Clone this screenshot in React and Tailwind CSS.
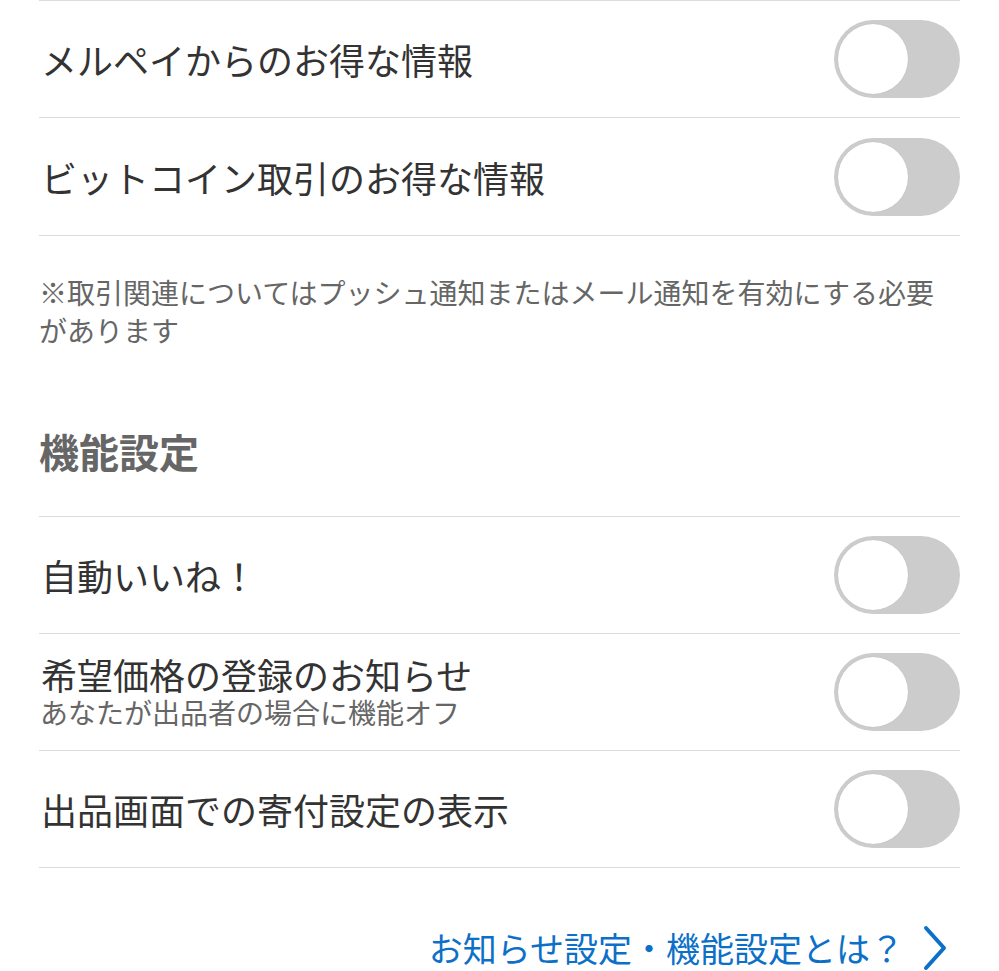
import React from "react";

function Toggle() {
  return (
    <div className="w-[126px] h-[78px] rounded-full bg-[#cccccc] p-[4px] shrink-0 flex items-center">
      <div className="w-[70px] h-[70px] rounded-full bg-white shadow-[0_0_1px_rgba(0,0,0,0.15)]" />
    </div>
  );
}

function Row({ title, sub, first }) {
  return (
    <div
      className={
        "flex items-center justify-between border-b border-[#dcdcdc]" +
        (first ? " border-t h-[118px]" : " h-[117px]")
      }
    >
      <div className="flex flex-col">
        <div className="text-[36px] leading-[40px] text-[#333333] pl-[2px]">{title}</div>
        {sub && (
          <div className="text-[28px] leading-[36px] text-[#666666] pl-[1px]">{sub}</div>
        )}
      </div>
      <Toggle />
    </div>
  );
}

export default function App() {
  return (
    <div
      className="bg-white w-[999px] h-[971px] overflow-hidden px-[39px]"
      style={{ fontFamily: '"Noto Sans CJK JP", "Noto Sans", sans-serif' }}
    >
      <div className="border-t border-[#dcdcdc] h-[118px] flex items-center justify-between border-b">
        <div className="text-[36px] leading-[40px] text-[#333333] pl-[2px]">メルペイからのお得な情報</div>
        <Toggle />
      </div>
      <div className="h-[118px] flex items-center justify-between border-b border-[#dcdcdc]">
        <div className="text-[36px] leading-[40px] text-[#333333] pl-[2px]">ビットコイン取引のお得な情報</div>
        <Toggle />
      </div>
      <div className="pt-[37px] text-[28px] leading-[38px] text-[#666666] pr-[10px]">
        ※取引関連についてはプッシュ通知またはメール通知を有効にする必要があります
      </div>
      <div className="pt-[78px] pb-[41px] text-[40px] leading-[48px] font-bold text-[#666666]">
        機能設定
      </div>
      <Row first title="自動いいね！" />
      <Row title="希望価格の登録のお知らせ" sub="あなたが出品者の場合に機能オフ" />
      <Row title="出品画面での寄付設定の表示" />
      <div className="pt-[56px] flex items-center justify-end gap-[16px] pr-[12px]">
        <span className="text-[34px] leading-[36px] text-[#0c70c8]">お知らせ設定・機能設定とは？</span>
        <svg width="28" height="48" viewBox="0 0 28 48" fill="none">
          <path d="M6 4 L24 24 L6 44" stroke="#0c70c8" strokeWidth="4" strokeLinecap="round" strokeLinejoin="round" />
        </svg>
      </div>
    </div>
  );
}
